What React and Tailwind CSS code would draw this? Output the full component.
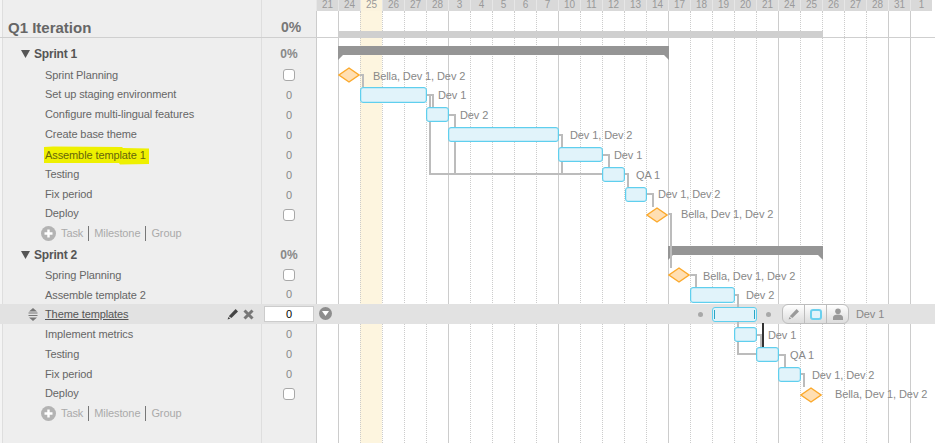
const FONT = { fontFamily: '"Liberation Sans", Arial, sans-serif' };
const days = [21,24,25,26,27,28,3,4,5,6,7,10,11,12,13,14,17,18,19,20,21,24,25,26,27,28,31,1];
const solid = new Set([0,1,6,11,16,21,26,27]);

const rows = [
  { t: 'sprint', name: 'Sprint 1', h: 22 },
  { t: 'ms', name: 'Sprint Planning' },
  { t: 'task', name: 'Set up staging environment', up: true },
  { t: 'task', name: 'Configure multi-lingual features', up: true },
  { t: 'task', name: 'Create base theme', up: true },
  { t: 'task', name: 'Assemble template 1', mark: true },
  { t: 'task', name: 'Testing', up: true },
  { t: 'task', name: 'Fix period', up: true },
  { t: 'ms', name: 'Deploy', h: 19, up: true },
  { t: 'add', up: true },
  { t: 'sprint', name: 'Sprint 2', h: 21 },
  { t: 'ms', name: 'Spring Planning' },
  { t: 'task', name: 'Assemble template 2', h: 19, down: true },
  { t: 'band', name: 'Theme templates' },
  { t: 'task', name: 'Implement metrics' },
  { t: 'task', name: 'Testing' },
  { t: 'task', name: 'Fix period' },
  { t: 'ms', name: 'Deploy', up: true },
  { t: 'add', up: true },
];

const bars = [
  [360,87,67,16],[426,107,23,15],[448,127,111,15],[558,147,45,15],[602,167,23,15],[625,187,22,15],
  [690,287,45,16],[734,327,23,15],[756,347,23,15],[778,367,23,15],
];
const milestones = [[338,67],[646,207],[668,267],[800,387]];
const labels = [
  ['Bella, Dev 1, Dev 2',373,76],['Dev 1',438,95],['Dev 2',460,115],['Dev 1, Dev 2',570,135],['Dev 1',614,155],['QA 1',636,175],['Dev 1, Dev 2',658,194],['Bella, Dev 1, Dev 2',681,214],
  ['Bella, Dev 1, Dev 2',703,276],['Dev 2',746,295],['Dev 1',856,314],['Dev 1',768,335],['QA 1',790,355],['Dev 1, Dev 2',812,375],['Bella, Dev 1, Dev 2',835,394],
];
const links = [
  'M360 75H363V87','M427 95H433V107','M427 95H430V174H602','M449 115H455V174','M559 135H562V174','M603 155H609V167','M625 174H628V187','M647 194H653V207','M668 214H671V268',
  'M690 275H696V287','M735 295H738V354H756','M757 335H761V347','M779 355H785V367','M801 374H804V387',
];

function Pencil({ className }) {
  return (
    <svg viewBox="0 0 12 12" className={className}>
      <path d="M8.6 1 11 3.4 4.4 10 1.8 8.2Z" fill="currentColor" />
      <path d="M1.4 9 3.4 10.6 0.6 11.6Z" fill="currentColor" />
    </svg>
  );
}

function Plus() {
  return (
    <svg viewBox="0 0 15 15" className="w-[15px] h-[15px]">
      <circle cx="7.5" cy="7.5" r="7.5" fill="#b3b3b3" />
      <path d="M7.5 3.5v8M3.5 7.5h8" stroke="#fff" strokeWidth="2.4" />
    </svg>
  );
}

function Check() {
  return <span className="block w-3 h-3 bg-white border border-[#a8a8a8] rounded-[3px]" />;
}

function NameCell({ r }) {
  const h = r.h || 20;
  const nudge = r.up ? ' pb-[2px]' : r.down ? ' pt-[2px]' : '';
  if (r.t === 'sprint') {
    return (
      <div className="flex items-center pl-[18px] text-[12px] tracking-[-0.2px] font-bold text-[#555]" style={{ height: h }}>
        <svg viewBox="0 0 9 8" className="w-[9px] h-2 mr-1"><path d="M0 0H9L4.5 8Z" fill="#555" /></svg>
        <span>{r.name}</span>
      </div>
    );
  }
  if (r.t === 'add') {
    return (
      <div className={'flex items-center pl-[38px] text-[11px] tracking-[-0.1px] text-[#aaa]' + nudge} style={{ height: h }}>
        <Plus />
        <span className="ml-[5px] pr-[5px] border-r border-[#777] leading-[15px]">Task</span>
        <span className="px-[5px] border-r border-[#777] leading-[15px]">Milestone</span>
        <span className="pl-[5px] leading-[15px]">Group</span>
      </div>
    );
  }
  if (r.t === 'band') {
    return (
      <div className="flex items-center -ml-[3px] -mr-px pl-[28px] bg-[#e2e2e2] text-[11px] tracking-[-0.1px] text-[#555]" style={{ height: h }}>
        <svg viewBox="0 0 10 13" className="w-[10px] h-[13px] mr-[7px]">
          <path d="M5 0 9 3.5H1Z" fill="#777" />
          <path d="M0.5 5H9.5M0.5 7.5H9.5" stroke="#777" strokeWidth="1" />
          <path d="M5 13 9 9.5H1Z" fill="#777" />
        </svg>
        <span className="underline flex-1">{r.name}</span>
        <Pencil className="w-3 h-3 text-[#444] mr-[4px]" />
        <svg viewBox="0 0 11 11" className="w-[11px] h-[11px] mr-[8px]"><path d="M1.5 1.5l8 8M9.5 1.5l-8 8" stroke="#777" strokeWidth="3" /></svg>
      </div>
    );
  }
  return (
    <div className={'flex items-center pl-[42px] text-[11px] tracking-[-0.1px] text-[#666]' + nudge} style={{ height: h }}>
      {r.mark ? <span className="text-[#66660a] relative">{r.name}</span> : <span>{r.name}</span>}
    </div>
  );
}

function ValueCell({ r }) {
  const h = r.h || 20;
  const cls = 'flex items-center justify-center';
  if (r.t === 'sprint') return <div className={cls + ' text-[12px] font-bold text-[#888]'} style={{ height: h }}>0%</div>;
  if (r.t === 'ms') return <div className={cls} style={{ height: h }}><Check /></div>;
  if (r.t === 'add') return <div style={{ height: h }} />;
  if (r.t === 'band') {
    return (
      <div className={cls + ' bg-[#e2e2e2]'} style={{ height: h }}>
        <div className="w-[50px] h-4 bg-white border border-[#ccc] flex items-center justify-center text-[11px] text-black">0</div>
      </div>
    );
  }
  return <div className={cls + ' text-[11px] text-[#888]'} style={{ height: h }}>0</div>;
}

function Bracket({ x, y, w }) {
  return (
    <svg className="absolute" style={{ left: x - 316, top: y }} width={w} height={15}>
      <path d={`M0 0H${w}V14L${w - 5} 9H5L0 14Z`} fill="#959595" />
    </svg>
  );
}

function Bar({ x, y, w, h }) {
  return (
    <div
      className="absolute box-border bg-[#e1f3fa] border border-[#5fcfee] rounded-[3px] shadow-[inset_0_0_0_0.5px_#a5e2f4]"
      style={{ left: x - 316, top: y, width: w, height: h }}
    />
  );
}

function Diamond({ x, y }) {
  return (
    <svg className="absolute" style={{ left: x - 316, top: y }} width={22} height={16}>
      <path d="M11 1 21 8 11 15 1 8Z" fill="#ffdfb3" stroke="#fba92c" strokeWidth="1.4" />
    </svg>
  );
}

export default function App() {
  return (
    <div className="w-[935px] h-[443px] flex overflow-hidden bg-white relative text-[#666]" style={FONT}>
      <div className="w-[316px] h-full flex shrink-0 bg-[#eeeeee]">
        <div className="w-[262px] h-full ml-0 pl-[2px] bg-[#f4f4f4] shrink-0">
          <div className="h-full border-l border-r border-[#dedede] bg-[#eeeeee]">
            <div className="h-[38px] -ml-[3px] -mr-px border-b border-[#cfcfcf] pt-[19px] pl-2 text-[15px] leading-[17px] font-bold text-[#666]">Q1 Iteration</div>
            <div className="h-[5px]" />
            <div className="relative">
              <svg className="absolute left-[41px] top-[103px]" width={106} height={19}>
                <path d="M0 1 9 .5 78 1 79 2 105 2.5V18L76 18.5 75 17 0 17Z" fill="#eef000" />
              </svg>
              <div className="relative">
                {rows.map((r, i) => <NameCell key={i} r={r} />)}
              </div>
            </div>
          </div>
        </div>
        <div className="flex-1 h-full">
          <div className="h-[38px] border-b border-[#cfcfcf] pt-[19px] pl-1 text-center text-[14px] leading-[17px] font-bold text-[#777]">0%</div>
          <div className="h-[5px]" />
          {rows.map((r, i) => <ValueCell key={i} r={r} />)}
        </div>
      </div>

      <div className="flex-1 h-full relative overflow-hidden">
        <div className="flex h-full">
          {days.map((d, i) => (
            <div key={i} className="w-[22px] shrink-0 h-full flex flex-col">
              <div className={'h-[11px] overflow-hidden text-center text-[10px] leading-[10px] text-[#999] border-l border-[#e6e6e6] ' + (i === 2 ? 'bg-[#fbf3dd]' : 'bg-[#d9d9d9]')}>{d}</div>
              <div className={'flex-1 border-l border-[#cccccc] ' + (solid.has(i) ? 'border-solid ' : 'border-dotted ') + (i === 2 ? 'bg-[#fdf5df]' : '')} />
            </div>
          ))}
        </div>
        <div className="absolute left-0 right-0 top-[37px] h-px bg-[#cfcfcf]" />
        <div className="absolute left-0 right-0 top-[304px] h-5 bg-[#e2e2e2]" />
        <div className="absolute left-[22px] top-[31px] w-[485px] h-[6px] bg-[#cfcfcf]" />

        <Bracket x={338} y={46} w={331} />
        <Bracket x={668} y={246} w={155} />

        <svg className="absolute left-[-316px] top-0" width={935 + 316} height={443}>
          <g fill="none" stroke="#bcbcbc" strokeWidth="2" shapeRendering="crispEdges">
            {links.map((d, i) => <path key={i} d={d} />)}
          </g>
          <path d="M762.5 323V347" stroke="#333" strokeWidth="2" shapeRendering="crispEdges" />
        </svg>

        {bars.map(([x, y, w, h], i) => <Bar key={i} x={x} y={y} w={w} h={h} />)}
        {milestones.map(([x, y], i) => <Diamond key={i} x={x} y={y} />)}
        {labels.map(([text, x, y], i) => (
          <span key={i} className="absolute text-[11px] tracking-[-0.1px] leading-[14px] whitespace-nowrap text-[#888]" style={{ left: x - 316, top: y - 7 }}>{text}</span>
        ))}

        <div className="absolute left-[3px] top-[307px] w-[13px] h-[13px] rounded-full bg-[#8d8d8d] flex items-center justify-center">
          <svg viewBox="0 0 7 5" className="w-[7px] h-[5px]"><path d="M0 0H7L3.5 5Z" fill="#fff" /></svg>
        </div>

        <span className="absolute left-[382px] top-[312px] w-[5px] h-[5px] rounded-full bg-[#a8a8a8]" />
        <span className="absolute left-[450px] top-[312px] w-[5px] h-[5px] rounded-full bg-[#a8a8a8]" />
        <div className="absolute left-[396px] top-[307px] w-[45px] h-[15px] box-border bg-[#e1f3fa] border border-[#5fcfee] rounded-[3px] flex items-center justify-between px-[1px]">
          <span className="w-px h-[9px] bg-[#2aa5c4]" />
          <span className="w-px h-[9px] bg-[#2aa5c4]" />
        </div>
        <div className="absolute left-[466px] top-[304px] w-[67px] h-5 box-border flex border border-[#bdbdbd] rounded-[6px] overflow-hidden bg-gradient-to-b from-[#ffffff] to-[#dcdcdc]">
          <div className="flex-1 flex items-center justify-center border-r border-[#bdbdbd]">
            <Pencil className="w-[12px] h-[12px] text-[#9a9a9a]" />
          </div>
          <div className="flex-1 flex items-center justify-center border-r border-[#bdbdbd]">
            <span className="w-[12px] h-[11px] box-border bg-[#e1f3fa] border-2 border-[#6bd0ee] rounded-[3px]" />
          </div>
          <div className="flex-1 flex items-center justify-center">
            <svg viewBox="0 0 10 12" className="w-[10px] h-3">
              <circle cx="5" cy="3.2" r="2.8" fill="#9a9a9a" />
              <path d="M0 12V9.5C0 7.5 2 6.5 5 6.5S10 7.5 10 9.5V12Z" fill="#9a9a9a" />
            </svg>
          </div>
        </div>
      </div>
    </div>
  );
}
